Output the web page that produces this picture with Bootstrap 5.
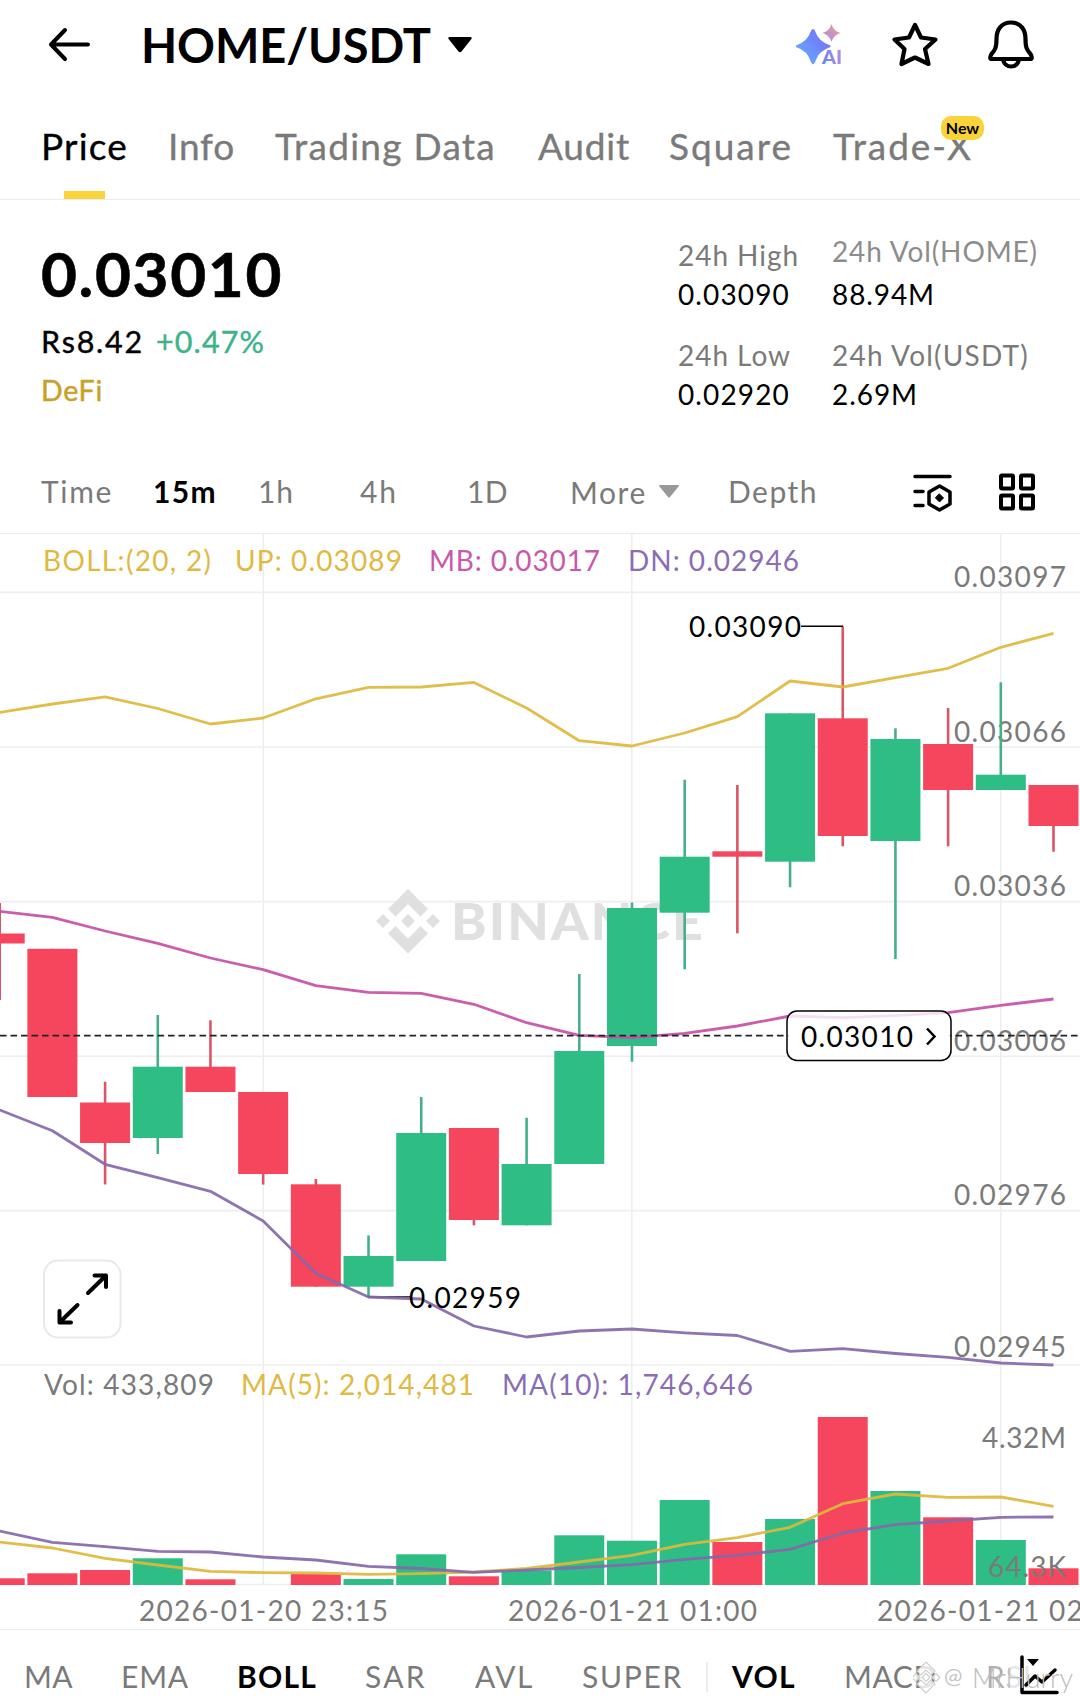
<!DOCTYPE html>
<html lang="en">
<head>
<meta charset="utf-8">
<meta name="viewport" content="width=device-width, initial-scale=1">
<title>HOME/USDT</title>
<link href="https://cdn.jsdelivr.net/npm/bootstrap@5.3.0/dist/css/bootstrap.min.css" rel="stylesheet">
<style>
  body { width: 1080px; height: 1704px; overflow: hidden; background: #fff; color: #000; font-family: Lato, "Noto Sans", sans-serif; }
  .muted { color: #7a7a7a; }
  .fit { white-space: nowrap; display: inline-block; }
  .topbar { height: 90px; padding: 0 45px 0 48px; }
  .pair { font-size: 47px; font-weight: 700; line-height: 60px; margin-left: 51px; }
  .caret { margin-left: 17px; margin-bottom: 1px; }
  .tabs { height: 110px; border-bottom: 1.5px solid #ebebeb; padding-left: 41px; display: grid; grid-template-columns: 127px 107px 263px 131px 164px 1fr; grid-template-rows: 109px; font-size: 37px; line-height: 112px; -webkit-text-stroke: .35px currentColor; }
  .tabs .on { color: #000; position: relative; }
  .tabs .on::after { content: ""; position: absolute; left: 23px; bottom: 0; width: 41px; height: 8px; background: #f8d33a; }
  .newtag { position: absolute; left: 108px; top: 26px; width: 43px; height: 24px; border-radius: 10px; background: #f8d33a; color: #000; font-size: 16px; font-weight: 700; line-height: 24px; text-align: center; -webkit-text-stroke: 0; }
  .quote { height: 250px; padding: 36px 0 0 41px; }
  .last { font-size: 62px; font-weight: 700; line-height: 74px; -webkit-text-stroke: .6px #000; }
  .sub { font-size: 30.5px; line-height: 44px; margin-top: 9px; -webkit-text-stroke: .4px currentColor; }
  .up { color: #3db388; margin-left: 12px; }
  .defi { font-size: 28.5px; line-height: 44px; margin-top: 5px; color: #c8a22c; -webkit-text-stroke: .5px currentColor; }
  .stats { width: 402px; display: grid; grid-template-columns: 154px 1fr; font-size: 28px; line-height: 39px; }
  .stats > div > div { height: 39px; }
  .stats .k2 { margin-top: 22px; }
  .stats .raised { position: relative; top: -4px; color: #8c8c8c; }
  .frames { height: 84px; border-bottom: 1.5px solid #ebebeb; padding-left: 41px; display: grid; grid-template-columns: 112px 105px 102px 107px 103px 158px 185px 85px 1fr; font-size: 30px; line-height: 82px; }
  .on-b { color: #000; font-weight: 700; }
  .chart { display: block; font-size: 28px; margin-top: -1px; }
  .inds { height: 75px; padding: 0 0 0 24px; border-top: 1.5px solid #ebebeb; display: grid; grid-template-columns: 97px 116px 128px 110px 107px 124px 26px 112px 142px 1fr; font-size: 30px; line-height: 93px; }
  .sep { width: 1.5px; height: 30px; background: #ececec; margin-top: 32px; }
  .indwrap { position: relative; }
  .faded { background: linear-gradient(90deg, #b0b0b0 0 45%, #e6e6e6 55%); -webkit-background-clip: text; background-clip: text; color: transparent; }
  .indicon { position: absolute; left: 1018px; top: 25px; }
  .credit { position: absolute; left: 913px; top: 25px; }
</style>
<script src="https://cdn.jsdelivr.net/npm/bootstrap@5.3.0/dist/js/bootstrap.bundle.min.js"></script>
</head>
<body>

<header class="topbar d-flex align-items-center">
  <svg width="42" height="36" viewBox="0 0 42 36" fill="none" stroke="#000" stroke-width="4" stroke-linecap="round" stroke-linejoin="round"><path d="M40 17.500H3M17 3 3 17.500 17 32"/></svg>
  <span class="pair fit" data-w="290">HOME/USDT</span>
  <svg class="caret" width="24" height="16" viewBox="0 0 24 16"><path d="M2 0h20q3 0 1 2.500L13.500 14.500q-1.500 1.500-3 0L1 2.500Q-1 0 2 0Z"/></svg>
  <div class="ms-auto d-flex align-items-center">
    <svg class="me-5" width="48" height="46" viewBox="0 0 48 46">
      <defs>
        <linearGradient id="ga" x1="0" y1="1" x2="1" y2="0"><stop offset="0" stop-color="#62b4ff"/><stop offset=".6" stop-color="#6f84fb"/><stop offset="1" stop-color="#8a70f0"/></linearGradient>
        <linearGradient id="gb" x1="0" y1="1" x2="1" y2="0"><stop offset="0" stop-color="#9c8cf0"/><stop offset="1" stop-color="#f79a92"/></linearGradient>
        <linearGradient id="gc"><stop offset="0" stop-color="#5f86f2"/><stop offset="1" stop-color="#b58ade"/></linearGradient>
      </defs>
      <path fill="url(#ga)" d="M18 7q1.500 0 2.500 3 3 9.500 15 13.500v1.500Q23.500 29 20.500 39q-1 3-2.500 3.500-1.500-.5-2.500-3.500Q12.500 29 1 25v-1.500Q12.500 19.500 15.500 10q1-3 2.500-3Z"/>
      <path fill="url(#gb)" d="M36.500 2q2 7 9 9-7 2-9 9-2-7-9-9 7-2 9-9Z"/>
      <text x="27" y="42" font-size="18.500" font-weight="900" textLength="20" lengthAdjust="spacingAndGlyphs" fill="url(#gc)" stroke="#fff" stroke-width="2" paint-order="stroke">AI</text>
      <text x="27" y="42" font-size="18.500" font-weight="900" textLength="20" lengthAdjust="spacingAndGlyphs" fill="url(#gc)" stroke="url(#gc)" stroke-width=".8" aria-hidden="true"></text>
    </svg>
    <svg class="me-5" width="48" height="48" viewBox="0 0 48 48" fill="none" stroke="#000" stroke-width="4.200" stroke-linejoin="round"><path d="M24 4 30 16.500 44.500 18.500 34 28 37.500 43 24 36.500 10.500 43 13.500 28 3.500 18.500 18 16.500Z"/></svg>
    <svg width="48" height="52" viewBox="0 0 48 52" fill="none" stroke="#000" stroke-width="4.200" stroke-linejoin="round"><path d="M24 3.500C14 3.500 9.500 11 9.500 20 9.500 29 8 31 4.500 35 2.500 38.500 3 40 5 40H43C45 40 45.500 38.500 43.500 35 40 31 38.500 29 38.500 20 38.500 11 34 3.500 24 3.500ZM16 41Q18 47.500 24 47.500T32 41"/></svg>
  </div>
</header>

<nav class="tabs muted">
  <span class="on"><span class="fit" data-w="87">Price</span></span>
  <span><span class="fit" data-w="67">Info</span></span>
  <span><span class="fit" data-w="221">Trading Data</span></span>
  <span><span class="fit" data-w="92">Audit</span></span>
  <span><span class="fit" data-w="124">Square</span></span>
  <span class="position-relative"><span class="fit" data-w="140">Trade-X</span><span class="newtag">New</span></span>
</nav>

<section class="quote d-flex justify-content-between">
  <div>
    <div class="last"><span class="fit" data-w="242">0.03010</span></div>
    <div class="sub d-flex"><span class="fit" data-w="103">Rs8.42</span><span class="up fit" data-w="109">+0.47%</span></div>
    <div class="defi"><span class="fit" data-w="62">DeFi</span></div>
  </div>
  <div class="stats">
    <div>
      <div class="muted"><span class="fit" data-w="121">24h High</span></div>
      <div><span class="fit" data-w="112">0.03090</span></div>
      <div class="muted k2"><span class="fit" data-w="113">24h Low</span></div>
      <div><span class="fit" data-w="112">0.02920</span></div>
    </div>
    <div>
      <div class="raised"><span class="fit" data-w="206">24h Vol(HOME)</span></div>
      <div><span class="fit" data-w="103">88.94M</span></div>
      <div class="muted k2"><span class="fit" data-w="197">24h Vol(USDT)</span></div>
      <div><span class="fit" data-w="86">2.69M</span></div>
    </div>
  </div>
</section>

<nav class="frames muted">
  <span><span class="fit" data-w="72">Time</span></span>
  <span class="on-b"><span class="fit" data-w="64">15m</span></span>
  <span><span class="fit" data-w="36">1h</span></span>
  <span><span class="fit" data-w="38">4h</span></span>
  <span><span class="fit" data-w="41">1D</span></span>
  <span class="d-flex align-items-center"><span class="fit" data-w="77">More</span><svg class="ms-2 ps-1" width="24" height="14" viewBox="0 0 20 14"><path fill="#999" d="M1 0h18q1.500 0 .5 1.500L11 12q-1 1-2 0L.5 1.500Q-.5 0 1 0Z"/></svg></span>
  <span><span class="fit" data-w="90">Depth</span></span>
  <span class="d-flex align-items-center"><svg width="40" height="40" viewBox="0 0 40 40" fill="none" stroke="#000" stroke-width="3.500" stroke-linecap="round" stroke-linejoin="round"><path d="M2 4.500H37M2 19.500H10M2 33.500H10M26.500 14 37 20V32L26.500 38 16 32V20Z"/><path fill="#000" stroke-width="1" d="M26.500 22 30.500 26 26.500 30 22.500 26Z"/></svg></span>
  <span class="d-flex align-items-center"><svg width="38" height="40" viewBox="0 0 38 40" fill="none" stroke="#000" stroke-width="4"><rect x="3" y="3.500" width="12" height="13" rx="1"/><rect x="23" y="3.500" width="12" height="13" rx="1"/><rect x="3" y="23.500" width="12" height="13" rx="1"/><rect x="23" y="23.500" width="12" height="13" rx="1"/></svg></span>
</nav>

<svg id="chart" class="chart" width="1080" height="1096" viewBox="0 533 1080 1096"></svg>

<div class="indwrap">
  <nav class="inds muted">
    <span><span class="fit" data-w="49">MA</span></span>
    <span><span class="fit" data-w="68">EMA</span></span>
    <span class="on-b"><span class="fit" data-w="80">BOLL</span></span>
    <span><span class="fit" data-w="62">SAR</span></span>
    <span><span class="fit" data-w="59">AVL</span></span>
    <span><span class="fit" data-w="101">SUPER</span></span>
    <span class="sep"></span>
    <span class="on-b"><span class="fit" data-w="64">VOL</span></span>
    <span><span class="fit" data-w="93">MACD</span></span>
    <span><span class="fit faded" data-w="46">RSI</span></span>
  </nav>
  <svg class="indicon" width="44" height="44" viewBox="0 0 44 44" fill="none" stroke="#000" stroke-width="3.500" stroke-linecap="round" stroke-linejoin="round"><path d="M4 3V38.500H39M8 31 17 22 24 28 37 16"/><path fill="#000" stroke="none" d="M9 5H21L15 12Z"/></svg>
  <svg class="credit" width="167" height="50" viewBox="0 0 167 50">
    <g fill="#fff" fill-opacity=".8" stroke="#cfcfcf" stroke-width="1.200">
      <path d="M13 8 22 17 18 21 13 16 8 21 4 17ZM13 39 4 30 8 26 13 31 18 26 22 30ZM13 19.500 17 23.500 13 27.500 9 23.500ZM3 19.500 7 23.500 3 27.500-1 23.500ZM23 19.500 27 23.500 23 27.500 19 23.500Z"/>
    </g>
    <text x="31" y="30" font-size="22" fill="#c6c6c6">@</text><text x="59" y="34" font-size="27" font-weight="300" textLength="101" fill="#bdbdbd">MrHurry</text>
  </svg>
</div>

<script>
  // Candles: [up, high, bodyTop, bodyBottom, low, volumeTop]
  const candles = [
    [0,903,933.5,943.5,1000,1578.3],[0,948.8,948.8,1097,1097,1573.3],[0,1081.7,1102.5,1143,1184.5,1570],
    [1,1015,1066.7,1138,1154,1558.3],[0,1020.3,1066.7,1092,1092,1579.3],[0,1092,1092,1174,1184.6,1585],
    [0,1179,1184.3,1286.7,1286.7,1574],[1,1235.4,1256,1286.7,1297,1579],[1,1097,1133,1261,1261,1554.3],
    [0,1128,1128,1220,1225.3,1576.3],[1,1117.7,1164,1225.3,1225.3,1570.5],[1,974,1051,1164,1164,1535.3],
    [1,902.5,908,1046,1061.7,1540.7],[1,779.7,856.7,912.7,969.3,1500],[0,785,851.3,856.7,933.3,1542],
    [1,713.3,713.3,861.7,887.3,1519],[0,626.3,718.3,836,846.3,1417],[1,728.3,739,841,959,1491],
    [0,708,744,790,846.3,1517.3],[1,682.3,774.7,790,790,1540],[0,785,785,826,851.7,1568.3]
  ];
  const lines = [
    ['#deb83c',[712.4,704,696.8,708.5,724,718,698.8,687.3,687,682.4,708,740.7,746,733,716.7,681,687,677.7,668.3,647.3,633.3]],
    ['#c64fa6',[911.3,917.3,931,943.3,958,969.7,985.7,992.3,993.3,1004.3,1022.7,1035.3,1037.7,1033.3,1026,1016,1017.7,1015.7,1012.7,1005.3,999]],
    ['#8468aa',[1110,1130.7,1164.3,1177.7,1191.3,1221,1273.3,1297,1299,1326,1337,1331,1329,1332.8,1335.5,1351.3,1348.7,1353.5,1357.3,1363,1365]],
    ['#deb83c',[1542,1548,1558.3,1565,1571.3,1572.7,1573,1574.3,1573.7,1572,1568.5,1562,1555.3,1544.3,1537.7,1527.3,1503.7,1494,1497.3,1497,1506.3]],
    ['#8468aa',[1531,1542.3,1546.7,1551.3,1552,1557,1560,1566.3,1568.5,1572.3,1570,1567.5,1564.7,1559.3,1555.3,1549.3,1533,1524.7,1521,1517.3,1517]]
  ];
  // Labels: [text, x, baseline, width, fill]
  const G = '#7a7a7a', Y = '#dfb942', M = '#c957ab', P = '#8b6db3', K = '#000';
  const labels = [
    ['BOLL:(20, 2)',43,571,168,Y],['UP: 0.03089',235,571,167,Y],['MB: 0.03017',429,571,171,M],['DN: 0.02946',628,571,171,P],
    ['0.03097',954,587,112,G],['0.03066',954,742,112,G],['0.03036',954,896,112,G],['0.03006',954,1051,112,G],['0.02976',954,1205,112,G],['0.02945',954,1357,112,G],
    ['0.03090',689,637,112,K],['0.02959',409,1308,112,K],
    ['Vol: 433,809',44,1395,170,G],['MA(5): 2,014,481',241,1395,233,Y],['MA(10): 1,746,646',502,1395,251,P],
    ['4.32M',982,1448,84,G],['64.3K',988,1577,78,G],
    ['2026-01-20 23:15',139,1621,249,G],['2026-01-21 01:00',508,1621,249,G],['2026-01-21 02:45',877,1621,249,G]
  ];
  const X = i => 52.69 * i - .3;
  const txt = ([t,x,y,w,f]) => `<text x="${x}" y="${y}" textLength="${w}" fill="${f}">${t}</text>`;
  let s = '<g stroke="#eeeeee" stroke-width="1.6">';
  for (const y of [592.4,747,901.6,1056.2,1210.6,1365,1584.5]) s += `<path d="M0 ${y}H1080"/>`;
  for (const x of [263.3,631.8,1000.8]) s += `<path d="M${x} 533V1584"/>`;
  s += '</g><g fill="#e0e0e0"><path d="M408 889 428 909 420.500 916.500 408 904 395.500 916.500 388 909ZM408 953.500 388 933.500 395.500 926 408 938.500 420.500 926 428 933.500ZM408 914 415 921 408 928 401 921ZM383 914 390 921 383 928 376 921ZM433 914 440 921 433 928 426 921Z"/><text x="451" y="939.500" font-size="50.500" font-weight="900" textLength="254" lengthAdjust="spacingAndGlyphs" letter-spacing="2">BINANCE</text></g>';
  s += labels.slice(4,10).map(txt).join('');
  candles.forEach(([up,h,t,b,l,v],i) => {
    const c = up ? '#2ebd85' : '#f6465d', w = up ? '#45b088' : '#dc5468', x = X(i);
    s += `<path stroke="${w}" stroke-width="2.600" d="M${x} ${h}V${l}"/><rect x="${x-25}" y="${t}" width="50" height="${b-t}" fill="${c}"/><rect x="${x-25}" y="${v}" width="50" height="${1585-v}" fill="${c}"/>`;
  });
  s += '<path stroke="#000" stroke-width="1.400" d="M801 626.300H843M368 1297H410"/>';
  for (const [c,p] of lines) s += `<polyline fill="none" stroke="${c}" stroke-opacity=".92" stroke-width="2.800" stroke-linejoin="round" points="${p.map((y,i)=>X(i)+','+y).join(' ')}"/>`;
  s += '<path stroke="#222" stroke-width="1.700" stroke-dasharray="6.600 3.900" d="M0 1035.700H1080"/>';
  s += labels.filter((_,i)=>i<4||i>9).map(txt).join('');
  s += '<rect x="787" y="1011" width="164" height="49.500" rx="10" fill="#fff" fill-opacity=".8" stroke="#000" stroke-width="1.500"/><rect x="789" y="1030" width="160" height="12" fill="#fff"/>' + txt(['0.03010',801,1047,112,K]) + '<path fill="none" stroke="#000" stroke-width="2.500" d="M927 1028.500 934.500 1036.500 927 1044.500"/>';
  s += '<rect x="44" y="1260.500" width="76.500" height="77" rx="14" fill="#fff" stroke="#e9e9e9" stroke-width="2"/><path fill="none" stroke="#000" stroke-width="4" stroke-linecap="round" stroke-linejoin="round" d="M88 1293 106 1275.500M94.500 1275.500H106V1287M77.500 1305 59.500 1322.500M59.500 1311V1322.500H71"/>';
  document.getElementById('chart').innerHTML = s;

  document.querySelectorAll('.fit').forEach(e => {
    const n = e.textContent.length;
    e.style.letterSpacing = ((+e.dataset.w - e.getBoundingClientRect().width) / n).toFixed(2) + 'px';
  });
</script>
</body>
</html>
